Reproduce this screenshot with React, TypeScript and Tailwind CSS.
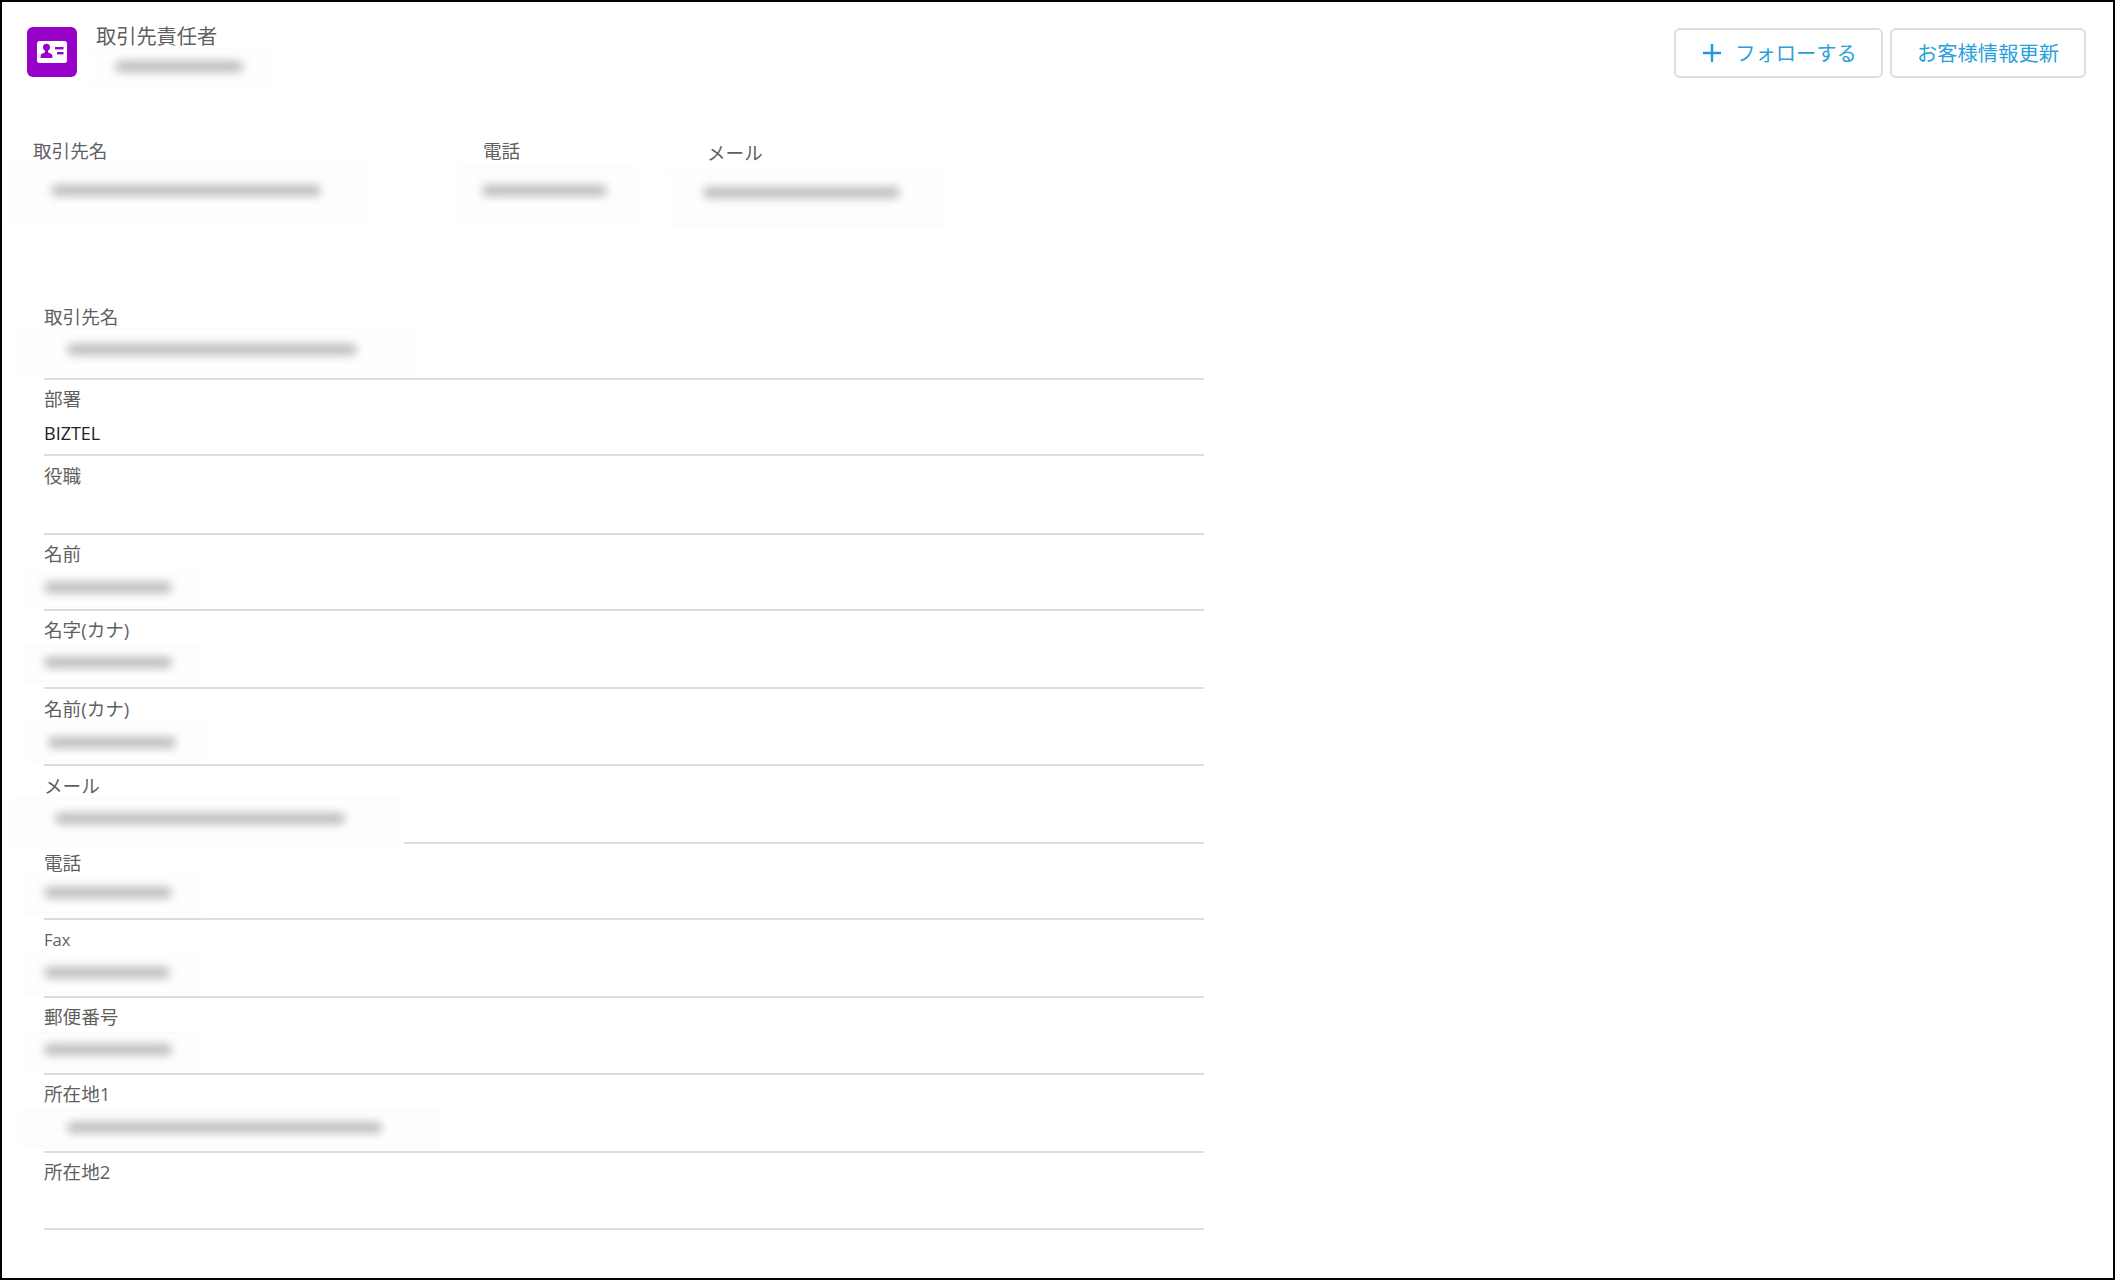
const labelClass = "block text-[18.6px] leading-[26px] text-[#5f5f5f] whitespace-nowrap";
const font = "font-['Open_Sans','Noto_Sans_CJK_JP',sans-serif]";

function Smudge({ patch, bar }: { patch: string; bar: string }) {
  return (
    <div className={`flex items-center border-y border-[#fafafa] bg-[#fefefe] ${patch}`}>
      <div className={`h-[11px] rounded-full bg-[#bababa] blur-[5px] ${bar}`} />
    </div>
  );
}

function Row({ label, height, children, small = false }: { label: string; height: string; children?: React.ReactNode; small?: boolean }) {
  return (
    <div className={`border-b-2 border-[#dddddd] ${height}`}>
      <span className={small ? "block whitespace-nowrap text-[16.5px] leading-[26px] text-[#5f5f5f]" : labelClass}>{label}</span>
      {children}
    </div>
  );
}

export default function App() {
  return (
    <div className={`h-[1280px] w-[2115px] overflow-hidden border-2 border-black bg-white ${font}`}>
      <header className="flex items-start justify-between pl-[25px] pr-[27px] pt-[25px]">
        <div className="flex items-start">
          <div className="flex h-[50px] w-[50px] items-center justify-center rounded-[6px] bg-[#9602c7]">
            <svg width="32" height="24" viewBox="0 0 32 24" aria-hidden="true">
              <rect x="1" y="1" width="30" height="22" rx="2.5" fill="#fff" />
              <circle cx="10.5" cy="7.2" r="3.5" fill="#9602c7" />
              <path d="M9 10h3v2.2l3.4 1.8c.7.4 1 .9 1 1.7V18H4.6v-2.3c0-.8.3-1.3 1-1.7L9 12.2z" fill="#9602c7" />
              <rect x="19" y="7" width="8.5" height="2.4" fill="#9602c7" />
              <rect x="21" y="12" width="6.5" height="2.4" fill="#9602c7" />
            </svg>
          </div>
          <div className="ml-[19px]">
            <div className="-mt-[3px] text-[20.2px] leading-[24px] text-[#5f5f5f]">取引先責任者</div>
            <Smudge patch="-ml-[4px] mt-[1px] h-[38px] w-[178px] pb-[4px] pl-[23px]" bar="w-[128px]" />
          </div>
        </div>
        <div className="mt-[1px] flex gap-[7px]">
          <button className="flex h-[50px] w-[209px] items-center justify-center rounded-[6px] border-2 border-[#dddddd] bg-white text-[20.3px] text-[#2a9fdc]">
            <svg width="20" height="20" viewBox="0 0 20 20" className="ml-[2px] mr-[13px]" aria-hidden="true">
              <path d="M10 1v18M1 10h18" stroke="#1b9be0" strokeWidth="2.4" fill="none" />
            </svg>
            フォローする
          </button>
          <button className="flex h-[50px] w-[196px] items-center justify-center rounded-[6px] border-2 border-[#dddddd] bg-white text-[20.3px] text-[#2a9fdc]">
            お客様情報更新
          </button>
        </div>
      </header>

      <section className="mt-[51px] flex items-start">
        <div className="ml-[5px] w-[363px]">
          <span className={`${labelClass} pl-[26px]`}>取引先名</span>
          <Smudge patch="h-[56px] w-[363px] pb-[4px] pl-[44px]" bar="w-[270px]" />
        </div>
        <div className="ml-[87px] w-[180px]">
          <span className={`${labelClass} pl-[26px]`}>電話</span>
          <Smudge patch="mt-[1px] h-[57px] w-[180px] pb-[6px] pl-[25px]" bar="w-[125px]" />
        </div>
        <div className="ml-[31px] mt-[2px] w-[276px]">
          <span className={`${labelClass} pl-[39px]`}>メール</span>
          <Smudge patch="mt-[2px] h-[57px] w-[276px] pb-[8px] pl-[35px]" bar="w-[197px]" />
        </div>
      </section>

      <section className="ml-[42px] mt-[79px] w-[1160px]">
        <Row label="取引先名" height="h-[76px]">
          <Smudge patch="-ml-[25px] -mt-[2px] h-[47px] w-[394px] pb-[5px] pl-[48px]" bar="w-[290px]" />
        </Row>
        <Row label="部署" height="h-[76px] pt-[6px]">
          <div className="mt-[9px] text-[18px] font-medium leading-[24px] text-[#24211f]">BIZTEL</div>
        </Row>
        <Row label="役職" height="h-[79px] pt-[7px]" />
        <Row label="名前" height="h-[76px] pt-[6px]">
          <Smudge patch="-ml-[22px] mt-[4px] h-[37px] w-[180px] pb-[4px] pl-[22px]" bar="w-[128px]" />
        </Row>
        <Row label="名字(カナ)" height="h-[78px] pt-[6px]">
          <Smudge patch="-ml-[22px] mt-[2px] h-[37px] w-[180px] pb-[2px] pl-[22px]" bar="w-[128px]" />
        </Row>
        <Row label="名前(カナ)" height="h-[77px] pt-[7px]">
          <Smudge patch="-ml-[18px] mt-[2px] h-[37px] w-[179px] pb-[1px] pl-[22px]" bar="w-[128px]" />
        </Row>
        <Row label="メール" height="h-[78px] pt-[7px]">
          <Smudge patch="-ml-[34px] -mt-[1px] h-[46px] w-[394px] pb-[6px] pl-[45px]" bar="w-[290px]" />
        </Row>
        <Row label="電話" height="h-[76px] pt-[6px]">
          <Smudge patch="-ml-[22px] -mt-[1px] h-[38px] w-[180px] pb-[4px] pl-[22px]" bar="w-[128px]" />
        </Row>
        <Row label="Fax" height="h-[78px] pt-[7px]" small>
          <Smudge patch="-ml-[22px] mt-[2px] h-[38px] w-[178px] pb-[4px] pl-[22px]" bar="w-[126px]" />
        </Row>
        <Row label="郵便番号" height="h-[77px] pt-[6px]">
          <Smudge patch="-ml-[22px] mt-[2px] h-[37px] w-[180px] pb-[3px] pl-[22px]" bar="w-[128px]" />
        </Row>
        <Row label="所在地1" height="h-[78px] pt-[6px]">
          <Smudge patch="-ml-[25px] mt-[3px] h-[37px] w-[423px] pb-[3px] pl-[48px]" bar="w-[315px]" />
        </Row>
        <Row label="所在地2" height="h-[77px] pt-[6px]" />
      </section>
    </div>
  );
}
